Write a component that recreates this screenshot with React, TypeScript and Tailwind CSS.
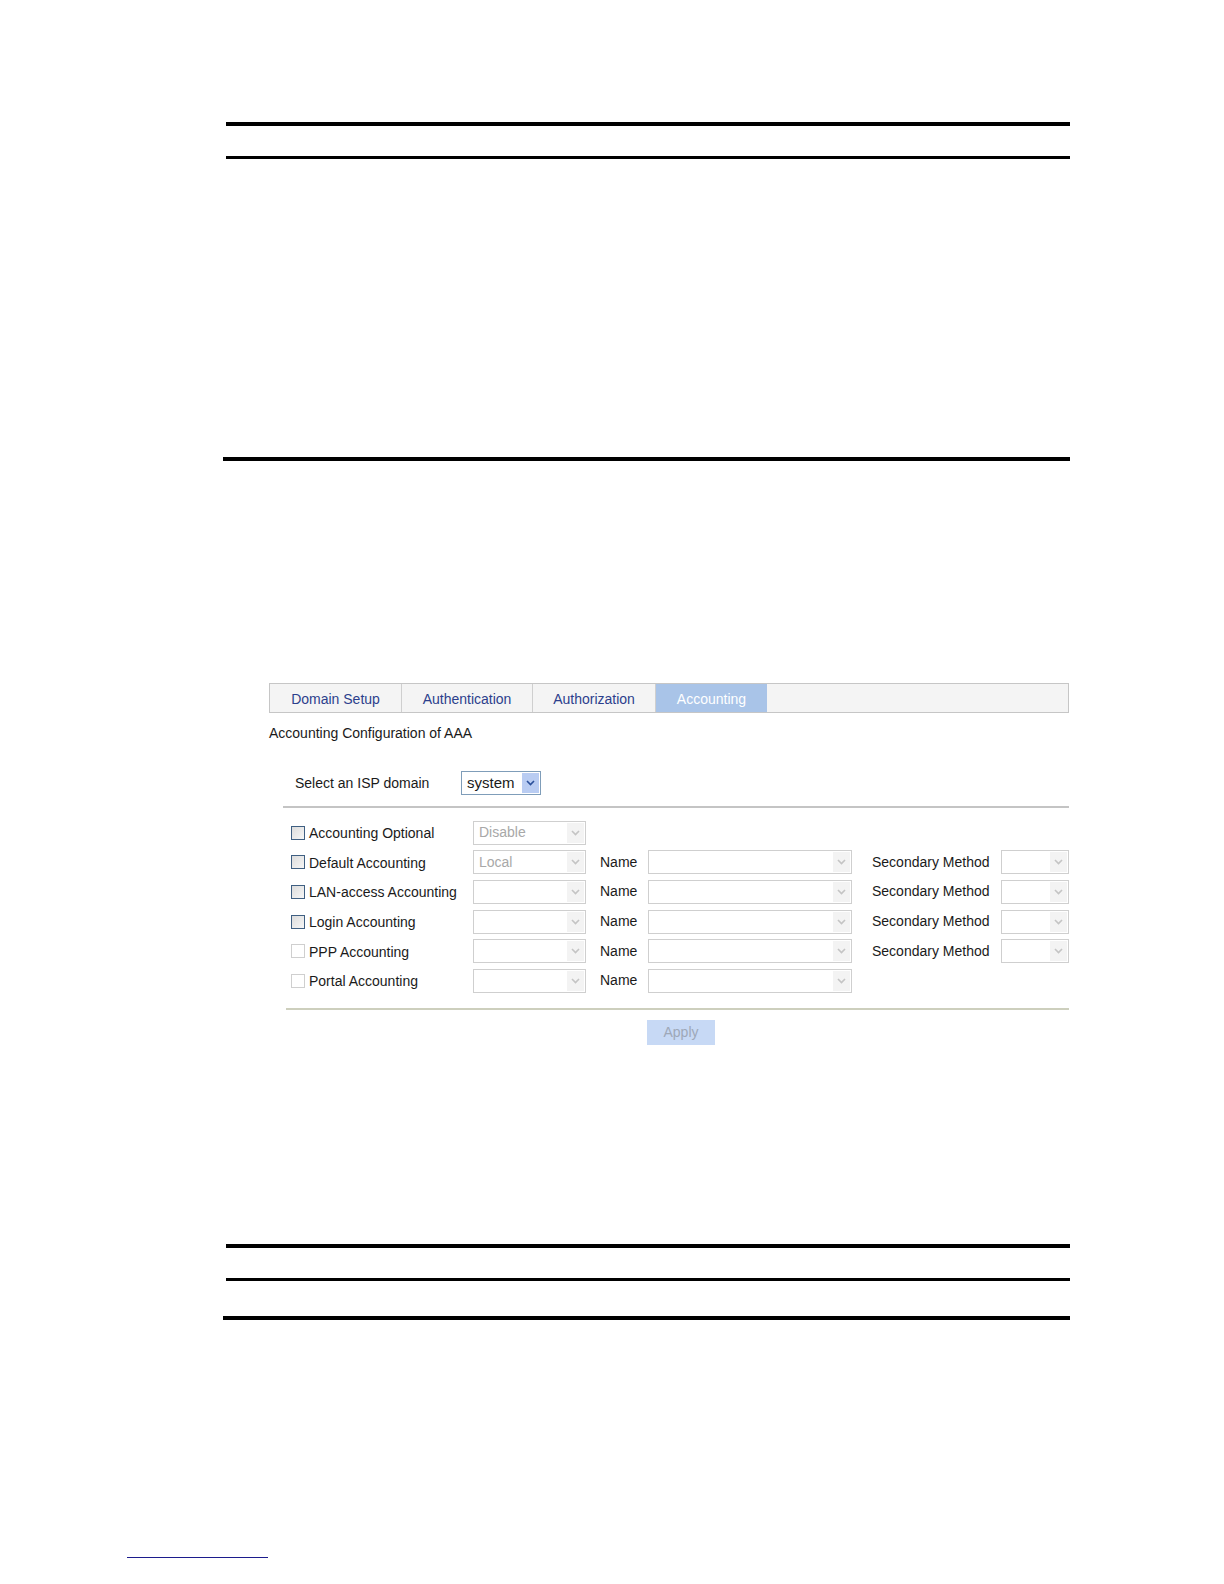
import React from "react";

function Chevron({ color }: { color: string }) {
  return (
    <svg width="9" height="6" viewBox="0 0 9 6" fill="none">
      <path d="M1 1l3.5 3.5L8 1" stroke={color} strokeWidth="1.6" />
    </svg>
  );
}

function DisabledSelect({ width, value }: { width: string; value?: string }) {
  return (
    <div
      className={`${width} flex h-[24px] items-center justify-between border border-[#cfcfcf] bg-white`}
    >
      <span className="pl-[5px] text-[14px] text-[#a8a8a8]">{value}</span>
      <span className="mr-[1px] flex h-[20px] w-[17px] items-center justify-center bg-[#f3f3f3]">
        <Chevron color="#c4c4c4" />
      </span>
    </div>
  );
}

function Checkbox({ active }: { active: boolean }) {
  return (
    <span
      className={
        active
          ? "h-[14px] w-[14px] border border-[#3f5f82] bg-gradient-to-br from-[#dcdcdc] to-[#f6f6f6]"
          : "h-[14px] w-[14px] border border-[#cfcfcf] bg-white"
      }
    />
  );
}

const rows = [
  { label: "Accounting Optional", active: true, value: "Disable", name: false, secondary: false },
  { label: "Default Accounting", active: true, value: "Local", name: true, secondary: true },
  { label: "LAN-access Accounting", active: true, value: "", name: true, secondary: true },
  { label: "Login Accounting", active: true, value: "", name: true, secondary: true },
  { label: "PPP Accounting", active: false, value: "", name: true, secondary: true },
  { label: "Portal Accounting", active: false, value: "", name: true, secondary: false },
];

const tabs = [
  { label: "Domain Setup", w: "w-[132px]" },
  { label: "Authentication", w: "w-[131px]" },
  { label: "Authorization", w: "w-[123px]" },
];

export default function App() {
  return (
    <div
      className="flex h-[1584px] w-[1224px] flex-col bg-white text-[#1a1a1a]"
      style={{ fontFamily: '"Liberation Sans", Arial, sans-serif' }}
    >
      {/* header rules */}
      <div className="ml-[226px] mt-[122px] h-[4px] w-[844px] bg-black" />
      <div className="ml-[226px] mt-[30px] h-[3px] w-[844px] bg-black" />
      <div className="ml-[223px] mt-[298px] h-[4px] w-[847px] bg-black" />

      {/* screenshot of the web UI */}
      <div className="ml-[269px] mt-[222px] w-[800px]">
        <div className="flex h-[30px] border border-[#c6c6c6] bg-[#f4f4f4]">
          {tabs.map((t) => (
            <div
              key={t.label}
              className={`${t.w} flex items-center justify-center border-r border-[#cfcfcf] pt-[3px] text-[14px] text-[#2c3f8c]`}
            >
              {t.label}
            </div>
          ))}
          <div className="flex w-[111px] items-center justify-center bg-[#a9c4e8] pt-[3px] text-[14px] text-white">
            Accounting
          </div>
        </div>

        <div className="mt-[12px] text-[14px] leading-[16px]">Accounting Configuration of AAA</div>

        <div className="mt-[30px] flex h-[24px] items-center">
          <span className="ml-[26px] w-[166px] text-[14px]">Select an ISP domain</span>
          <div className="flex h-[24px] w-[80px] items-center justify-between border border-[#7f9db9] bg-white">
            <span className="pl-[5px] text-[15px]">system</span>
            <span className="mr-[1px] flex h-[20px] w-[17px] items-center justify-center bg-[#b9ccf2]">
              <Chevron color="#2a4f9a" />
            </span>
          </div>
        </div>

        <div className="ml-[14px] mt-[11px] h-[2px] w-[786px] bg-[#c4c4c4]" />

        <div className="mt-[10px] flex flex-col">
          {rows.map((r) => (
            <div key={r.label} className="flex h-[29.6px] items-center">
              <span className="ml-[22px] flex w-[182px] items-center gap-[4px]">
                <Checkbox active={r.active} />
                <span className="pt-[2px] text-[14px]">{r.label}</span>
              </span>
              <DisabledSelect width="w-[113px]" value={r.value} />
              {r.name && (
                <>
                  <span className="ml-[14px] w-[48px] text-[14px]">Name</span>
                  <DisabledSelect width="w-[204px]" />
                </>
              )}
              {r.secondary && (
                <>
                  <span className="ml-[20px] w-[129px] text-[14px]">Secondary Method</span>
                  <DisabledSelect width="w-[68px]" />
                </>
              )}
            </div>
          ))}
        </div>

        <div className="ml-[17px] mt-[12px] h-[2px] w-[783px] bg-[#cdcfbd]" />

        <div className="ml-[378px] mt-[10px] flex h-[25px] w-[68px] items-center justify-center bg-[#c7d9f5] text-[14px] text-[#9ea8b8]">
          Apply
        </div>
      </div>

      {/* footer rules */}
      <div className="ml-[226px] mt-[199px] h-[4px] w-[844px] bg-black" />
      <div className="ml-[226px] mt-[30px] h-[3px] w-[844px] bg-black" />
      <div className="ml-[223px] mt-[35px] h-[4px] w-[847px] bg-black" />

      <div className="ml-[127px] mt-[237px] h-[1px] w-[141px] bg-[#1c1c8c]" />
    </div>
  );
}
